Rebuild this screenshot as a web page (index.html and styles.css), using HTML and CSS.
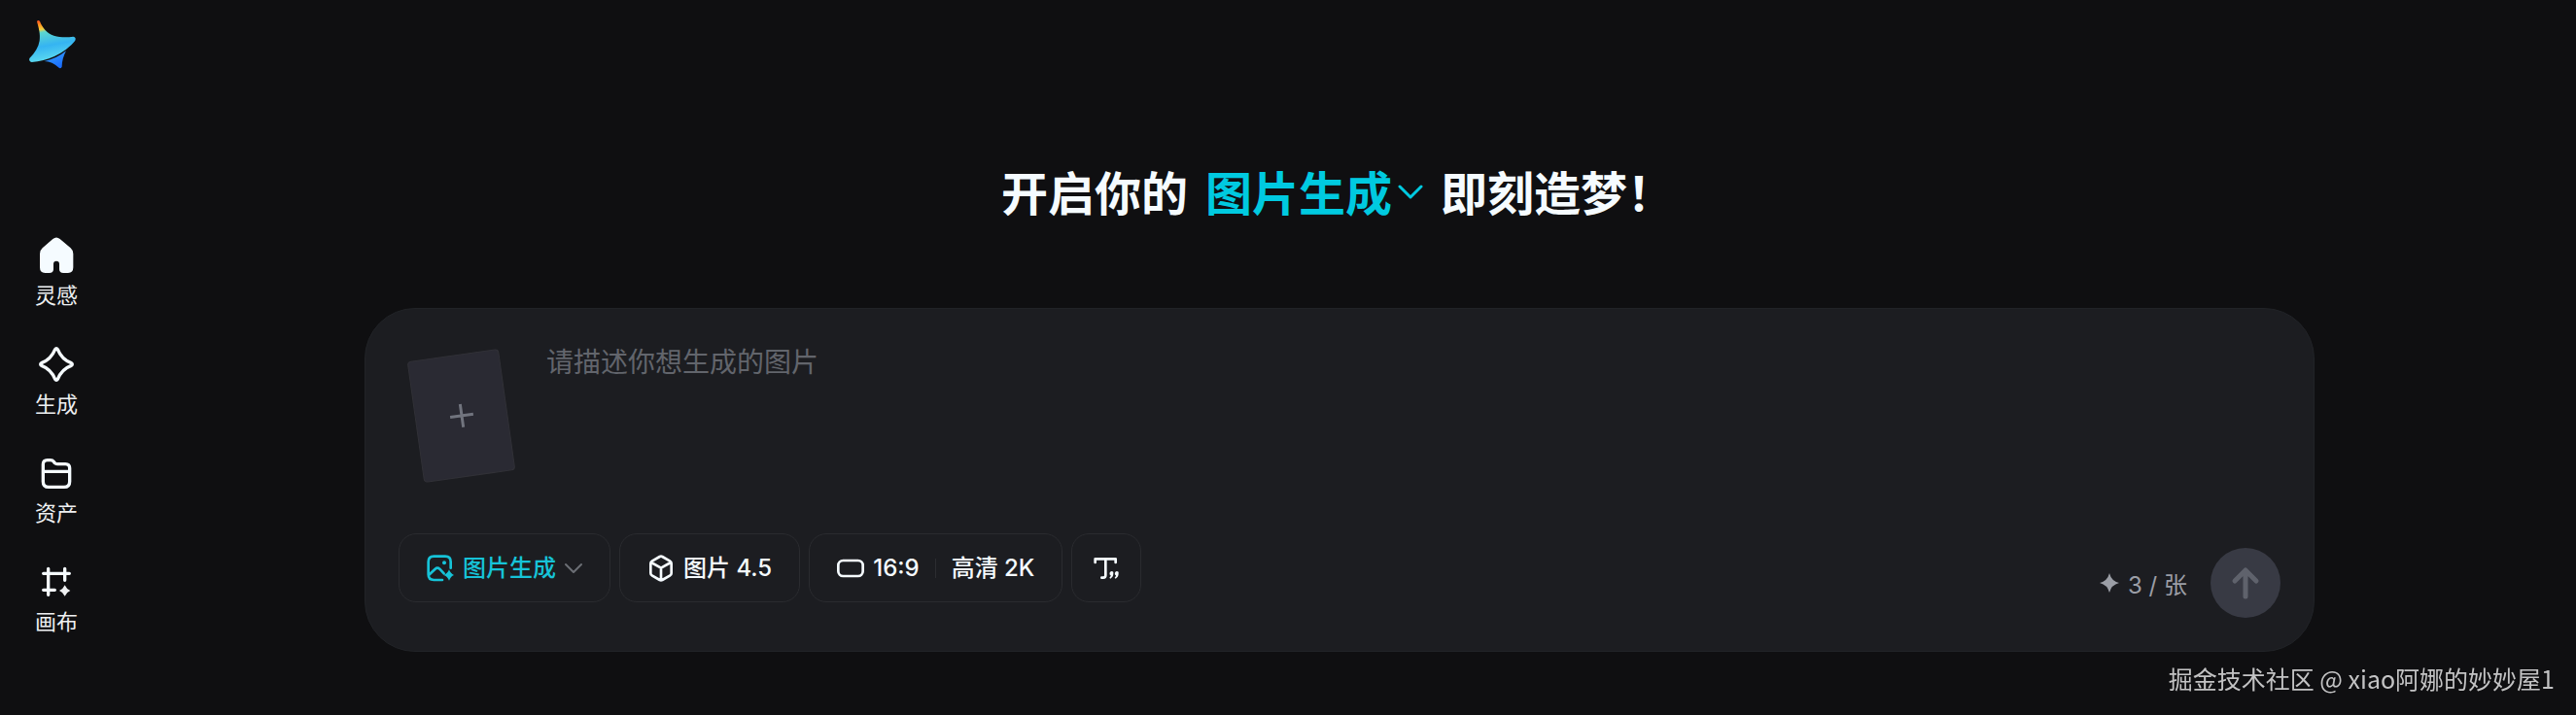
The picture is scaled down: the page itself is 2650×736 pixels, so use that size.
FILE: index.html
```html
<!DOCTYPE html>
<html lang="zh-CN">
<head>
  <meta charset="UTF-8">
  <meta name="viewport" content="width=device-width, initial-scale=1">
  <title>图片生成</title>
  <link rel="stylesheet" href="styles.css">
</head>
<body>

  <!-- Sidebar -->
  <aside class="sidebar">
    <a class="logo" href="#" aria-label="首页">
      <svg viewBox="84 60 156 156">
        <defs>
          <linearGradient id="logoMain" x1="0.3" y1="0" x2="0.5" y2="1">
            <stop offset="0" stop-color="#ff5a1f"/>
            <stop offset="0.1" stop-color="#ff9a1f"/>
            <stop offset="0.2" stop-color="#f0d040"/>
            <stop offset="0.27" stop-color="#5cd6d0"/>
            <stop offset="0.6" stop-color="#35b4f2"/>
            <stop offset="1" stop-color="#62e0ee"/>
          </linearGradient>
          <linearGradient id="logoTail" x1="0" y1="0" x2="0.6" y2="1">
            <stop offset="0" stop-color="#3aa8f5"/>
            <stop offset="1" stop-color="#1a6cff"/>
          </linearGradient>
        </defs>
        <path fill="url(#logoMain)" d="M114 66Q118 60 123 66C132 88 146 104 166 110C186 116 206 116 226 113Q236 115 232 125C218 143 196 160 168 174C146 184 122 190 98 192Q88 189 91 180C108 163 119 145 122 126C125 106 120 88 114 66Z"/>
        <path fill="url(#logoTail)" d="M137 189C162 184 184 173 204 157C196 172 191 190 191 206Q187 214 180 208C168 196 154 190 137 189Z"/>
      </svg>
    </a>
    <nav class="menu">
      <a class="menu-item" href="#">
        <svg class="menu-icon" viewBox="0 0 120 120">
          <path fill="#f5fbff" d="M49 9Q60 0 71 9L104 37Q112 44 112 55V97Q112 114 96 114H82Q69 114 69 103V86A9 9 0 0 0 51 86V103Q51 114 38 114H25Q9 114 9 97V55Q9 44 17 37Z"/>
        </svg>
        <span>灵感</span>
      </a>
      <a class="menu-item" href="#">
        <svg class="menu-icon line" viewBox="0 0 120 120">
          <path d="M56 14Q60 8 64 14C72 34 84 48 106 56Q112 60 106 64C84 72 72 86 64 106Q60 112 56 106C48 86 36 72 14 64Q8 60 14 56C36 48 48 34 56 14Z"/>
        </svg>
        <span>生成</span>
      </a>
      <a class="menu-item" href="#">
        <svg class="menu-icon line" viewBox="0 0 120 120">
          <path d="M19 86V33Q19 20 32 20H42Q48 20 52 25L55 29Q58 32 63 32H88Q101 32 101 45V86Q101 103 84 103H36Q19 103 19 86ZM19 55H101"/>
        </svg>
        <span>资产</span>
      </a>
      <a class="menu-item" href="#">
        <svg class="menu-icon line" viewBox="0 0 120 120">
          <path d="M20 34H100M35 19V100M86 19V55M20 85H55"/>
          <path class="solid" d="M86 70Q91 82 103 87Q91 92 86 104Q81 92 69 87Q81 82 86 70Z"/>
        </svg>
        <span>画布</span>
      </a>
    </nav>
  </aside>

  <!-- Generator -->
  <main class="main">
    <h1 class="title">
      <span>开启你的</span>
      <button class="title-type" type="button">
        图片生成
        <svg class="title-arrow" viewBox="0 0 26 26"><path d="M2 9L13 20L24 9"/></svg>
      </button>
      <span>即刻造梦！</span>
    </h1>

    <form class="panel">
      <div class="prompt">
        <button class="upload" type="button" aria-label="上传参考图">
          <svg viewBox="0 0 26 26"><path d="M13 1V25M1 13H25"/></svg>
        </button>
        <textarea class="prompt-input" aria-label="图片描述" placeholder="请描述你想生成的图片"></textarea>
      </div>

      <div class="actions">
        <div class="tools">
          <button class="tool tool-active" type="button">
            <svg class="tool-icon" viewBox="0 0 84 84">
              <path d="M48 78H22Q5 78 5 61V22Q5 5 22 5H57Q74 5 74 22V41M6 63L26 44Q33 38 40 44L53 58"/>
              <circle class="solid" cx="54" cy="25" r="6"/>
              <path class="solid" d="M69 46Q74 59 84 63Q74 67 69 80Q64 67 52 63Q64 59 69 46Z"/>
            </svg>
            图片生成
            <svg class="tool-arrow" viewBox="0 0 18 18"><path d="M1 5L9 13L17 5"/></svg>
          </button>
          <button class="tool" type="button">
            <svg class="tool-icon" viewBox="0 0 84 84">
              <path d="M38 6Q42 4 46 6L70 20Q74 22 74 27V57Q74 62 70 64L46 78Q42 80 38 78L14 64Q10 62 10 57V27Q10 22 14 20ZM12 24L42 41L72 24M42 41V78"/>
            </svg>
            图片 4.5
          </button>
          <button class="tool" type="button">
            <svg class="tool-icon" viewBox="0 0 84 84">
              <rect x="4" y="18" width="76" height="48" rx="15"/>
            </svg>
            16:9
            <span class="divider"></span>
            高清 2K
          </button>
          <button class="tool tool-square" type="button" aria-label="文字">
            <svg class="tool-icon" viewBox="0 0 84 84">
              <path d="M8 24V13H71V24M40 13V64Q40 71 33 71H28"/>
              <path class="solid" d="M58 51a6 6 0 0 1 6 7q0 11-9 16l-3-3q4-3 4-7a7 7 0 0 1 2-13ZM74 51a6 6 0 0 1 6 7q0 11-9 16l-3-3q4-3 4-7a7 7 0 0 1 2-13Z"/>
            </svg>
          </button>
        </div>

        <div class="submit">
          <span class="cost">
            <svg viewBox="0 0 20 20"><path d="M10 0Q12 8 20 10Q12 12 10 20Q8 12 0 10Q8 8 10 0Z"/></svg>
            3 / 张
          </span>
          <button class="send" type="submit" aria-label="生成">
            <svg viewBox="0 0 36 36"><path d="M18 32V5M7 16L18 5L29 16"/></svg>
          </button>
        </div>
      </div>
    </form>
  </main>

  <div class="watermark">掘金技术社区 @ xiao阿娜的妙妙屋1</div>

</body>
</html>
```
FILE: styles.css
```css
* {
  box-sizing: border-box;
}

body {
  margin: 0;
  min-height: 100vh;
  display: flex;
  background: #0f0f11;
  color: #f5fbff;
  font-family: Inter, "Noto Sans CJK SC", sans-serif;
}

svg {
  display: block;
  fill: none;
  stroke-linecap: round;
  stroke-linejoin: round;
}

button {
  margin: 0;
  padding: 0;
  border: none;
  background: none;
  color: inherit;
  font: inherit;
  cursor: pointer;
}

/* Sidebar */
.sidebar {
  flex: none;
  width: 116px;
  padding-top: 20px;
}

.logo {
  display: block;
  width: 52px;
  margin-left: 28px;
}

.menu {
  display: flex;
  flex-direction: column;
  gap: 38px;
  margin-top: 171px;
}

.menu-item {
  display: flex;
  flex-direction: column;
  align-items: center;
  gap: 8px;
  color: #eef0f2;
  font-size: 22px;
  line-height: 26px;
  text-decoration: none;
}

.menu-icon {
  width: 40px;
  height: 40px;
}

.line {
  stroke: #f5fbff;
  stroke-width: 10;
}

.solid {
  fill: currentColor;
  stroke: none;
}

/* Generator */
.main {
  flex: 1;
  display: flex;
  flex-direction: column;
  align-items: center;
  padding: 164px 10px 64px 0;
}

.title {
  display: flex;
  align-items: center;
  gap: 18px;
  margin: 0 4px 89px 0;
  font-family: "Noto Sans CJK SC", sans-serif;
  font-size: 48px;
  font-weight: 700;
  line-height: 64px;
}

.title-type {
  display: flex;
  align-items: center;
  gap: 6px;
  color: #00cae0;
}

.title-arrow {
  width: 26px;
  height: 26px;
  stroke: #00cae0;
  stroke-width: 3;
}

.panel {
  width: 92%;
  max-width: 2006px;
  padding: 34px;
  border: 1px solid #212327;
  border-radius: 52px;
  background: #1c1d21;
}

.prompt {
  display: flex;
  gap: 40px;
  height: 197px;
  padding-left: 17px;
}

.upload {
  flex: none;
  display: flex;
  align-items: center;
  justify-content: center;
  width: 95px;
  height: 126px;
  margin-top: 13px;
  border: 1px solid #313137;
  border-radius: 4px;
  background: #2a2a33;
  transform: rotate(-8deg);
}

.upload svg {
  width: 26px;
  height: 26px;
  stroke: #71747e;
  stroke-width: 3;
  stroke-linecap: butt;
}

.prompt-input {
  flex: 1;
  height: 160px;
  padding: 0;
  border: none;
  outline: none;
  resize: none;
  background: none;
  color: #f5fbff;
  font-family: "Noto Sans CJK SC", sans-serif;
  font-size: 28px;
  line-height: 38px;
}

.prompt-input::placeholder {
  color: #62656c;
}

.actions {
  display: flex;
  justify-content: space-between;
  height: 87px;
}

.tools {
  display: flex;
  align-items: flex-start;
  gap: 9px;
}

.tool {
  display: flex;
  align-items: center;
  gap: 9px;
  height: 71px;
  padding: 0 28px;
  border: 1px solid #2a2b2f;
  border-radius: 18px;
  font-size: 24px;
  font-weight: 500;
  line-height: 32px;
}

.tool-icon {
  width: 28px;
  height: 28px;
  stroke: currentColor;
  stroke-width: 8;
}

.tool-active {
  color: #16c3d8;
}

.tool-arrow {
  width: 18px;
  height: 18px;
  stroke: #6b6e75;
  stroke-width: 2;
}

.tool-square {
  width: 72px;
  padding: 0 21px;
}

.divider {
  width: 1px;
  height: 20px;
  margin: 0 7px;
  background: #2c2d31;
}

.submit {
  display: flex;
  align-items: flex-end;
  gap: 24px;
}

.cost {
  display: flex;
  align-items: center;
  gap: 9px;
  height: 72px;
  color: #9b9ea6;
  font-size: 24px;
}

.cost svg {
  width: 20px;
  height: 20px;
  fill: #9b9ea6;
}

.send {
  display: flex;
  align-items: center;
  justify-content: center;
  width: 72px;
  height: 72px;
  border-radius: 50%;
  background: #383a44;
}

.send svg {
  width: 36px;
  height: 36px;
  stroke: #5f626c;
  stroke-width: 5;
}

/* Overlay in the page corner */
.watermark {
  position: fixed;
  right: 22px;
  bottom: 23px;
  color: #c3c3c4;
  font-family: "Noto Sans CJK SC", sans-serif;
  font-size: 25px;
  line-height: 30px;
}
```
